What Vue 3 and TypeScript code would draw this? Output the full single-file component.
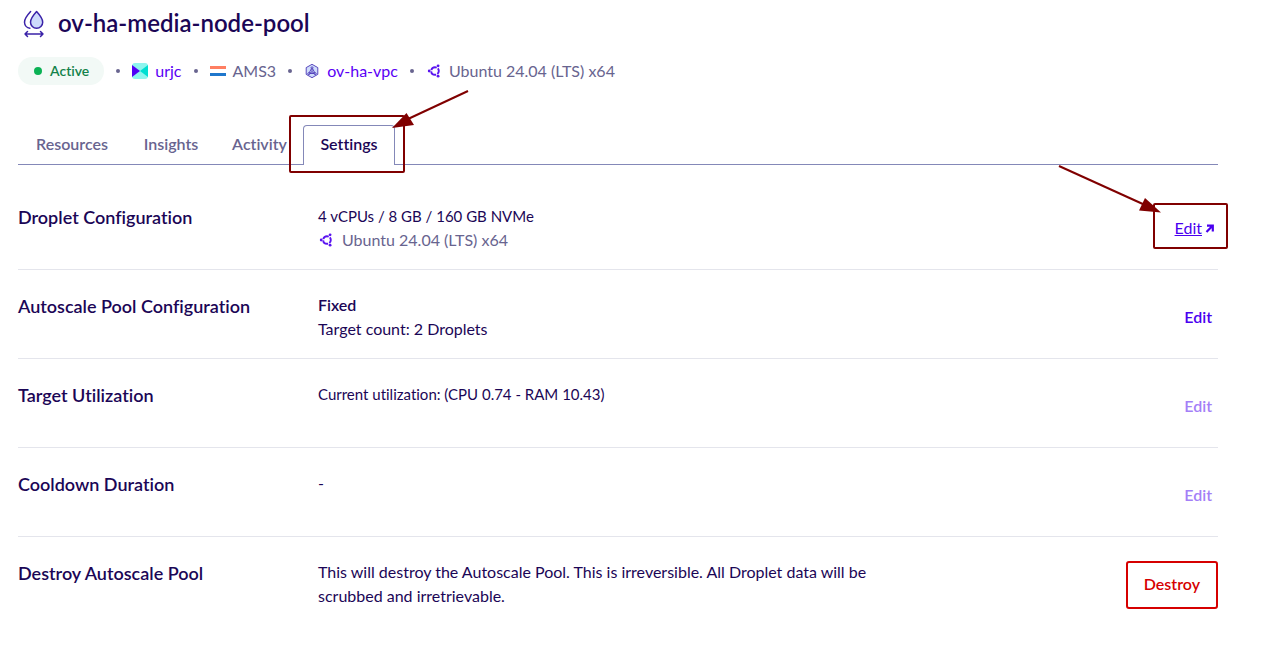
<script setup lang="ts">
interface Tab {
  label: string
  size: string
  active?: boolean
}

interface Setting {
  title: string
  strong?: string
  text: string
  figures?: boolean
  image?: string
  action: 'link' | 'edit' | 'disabled' | 'destroy'
}

const tabs: Tab[] = [
  { label: 'Resources', size: 'tab-xl' },
  { label: 'Insights', size: 'tab-m' },
  { label: 'Activity', size: 'tab-s' },
  { label: 'Settings', size: 'tab-l', active: true },
]

const settings: Setting[] = [
  {
    title: 'Droplet Configuration',
    text: '4 vCPUs / 8 GB / 160 GB NVMe',
    figures: true,
    image: 'Ubuntu 24.04 (LTS) x64',
    action: 'link',
  },
  {
    title: 'Autoscale Pool Configuration',
    strong: 'Fixed',
    text: 'Target count: 2 Droplets',
    action: 'edit',
  },
  {
    title: 'Target Utilization',
    text: 'Current utilization: (CPU 0.74 - RAM 10.43)',
    figures: true,
    action: 'disabled',
  },
  { title: 'Cooldown Duration', text: '-', action: 'disabled' },
  {
    title: 'Destroy Autoscale Pool',
    text: 'This will destroy the Autoscale Pool. This is irreversible. All Droplet data will be scrubbed and irretrievable.',
    action: 'destroy',
  },
]
</script>

<template>
  <main class="page">
    <svg class="defs" width="0" height="0" aria-hidden="true">
      <symbol id="ubuntu" viewBox="0 0 16 16">
        <circle cx="9" cy="8" r="3.8" fill="none" stroke="currentColor" stroke-width="1.9" stroke-dasharray="6.7 1.26" stroke-dashoffset="3.35" />
        <circle cx="3.2" cy="8" r="1.4" fill="currentColor" />
        <circle cx="12.1" cy="2.8" r="1.4" fill="currentColor" />
        <circle cx="12.1" cy="13.2" r="1.4" fill="currentColor" />
      </symbol>
    </svg>

    <header class="head">
      <svg class="pool-icon" viewBox="0 0 32 32" width="32" height="32" aria-hidden="true">
        <g fill="none" stroke="#3a22a8" stroke-width="1.5" stroke-linecap="round" stroke-linejoin="round">
          <path d="M12.6 4.6C9.300 8.200 6.500 11.600 6.500 15.200a6.200 6.200 0 0 0 5.400 6" />
          <path d="M18.600 4.600C15.600 7.900 12.500 11.900 12.500 15.200a6.100 6.100 0 0 0 12.200 0C24.700 11.900 21.600 7.900 18.600 4.600z" fill="#cddafb" />
          <path d="M7 27H25M9.500 24.500L7 27l2.500 2.500M22.500 24.500L25 27l-2.500 2.500" />
        </g>
      </svg>
      <h1>ov-ha-media-node-pool</h1>
    </header>

    <div class="meta">
      <span class="status"><i class="status-dot"></i>Active</span>
      <i class="sep"></i>
      <a class="meta-item" href="#team">
        <svg viewBox="0 0 16 16" width="16" height="16" aria-hidden="true">
          <rect width="16" height="16" rx="3" fill="#8df5ee" />
          <path d="M0 2L8 8L0 14z" fill="#4f00f5" />
          <path d="M16 2L8 8L16 14z" fill="#00dfd2" />
        </svg>
        urjc
      </a>
      <i class="sep"></i>
      <span class="meta-item">
        <svg viewBox="0 0 16 16" width="16" height="16" aria-hidden="true">
          <rect y="3" width="16" height="3" fill="#ff7f62" />
          <rect y="10" width="16" height="3" fill="#1f77cc" />
        </svg>
        AMS3
      </span>
      <i class="sep"></i>
      <a class="meta-item" href="#vpc">
        <svg viewBox="0 0 16 16" width="16" height="16" aria-hidden="true">
          <g fill="none" stroke="#4a35b5" stroke-width="0.9" stroke-linejoin="round">
            <path d="M8 1.300L13.800 4.600V11.400L8 14.700L2.200 11.400V4.600z" fill="#cfdcfb" />
            <path d="M8 5.200V8.800M7.500 5.500L4.800 10.500H11.200L8.500 5.500M8 8.800L4.800 10.800M8 8.800L11.200 10.800" />
            <circle cx="8" cy="4.800" r="1" fill="#cfdcfb" />
            <circle cx="4.800" cy="10.700" r="1" fill="#cfdcfb" />
            <circle cx="11.200" cy="10.700" r="1" fill="#cfdcfb" />
          </g>
        </svg>
        ov-ha-vpc
      </a>
      <i class="sep"></i>
      <span class="meta-item">
        <svg class="ubuntu" width="16" height="16" aria-hidden="true"><use href="#ubuntu" /></svg>
        Ubuntu 24.04 (LTS) x64
      </span>
    </div>

    <nav class="tabs">
      <a
        v-for="tab in tabs"
        :key="tab.label"
        href="#"
        :class="['tab', tab.size, { active: tab.active }]"
        :aria-current="tab.active ? 'page' : undefined"
      >
        {{ tab.label }}
        <template v-if="tab.active">
          <span class="mark mark-tab"></span>
          <svg class="arrow arrow-tab" viewBox="0 0 80 42" width="80" height="42" aria-hidden="true">
            <path d="M78 3L18 31" />
            <path class="tip" d="M2 40L16.500 25L24 37z" />
          </svg>
        </template>
      </a>
    </nav>

    <section v-for="row in settings" :key="row.title" class="row">
      <h2>{{ row.title }}</h2>
      <div class="detail">
        <strong v-if="row.strong">{{ row.strong }}</strong>
        <p :class="{ figures: row.figures }">{{ row.text }}</p>
        <p v-if="row.image" class="image">
          <svg class="ubuntu" width="16" height="16" aria-hidden="true"><use href="#ubuntu" /></svg>
          {{ row.image }}
        </p>
      </div>
      <div v-if="row.action === 'link'" class="action">
        <a class="edit-link" href="#resize">
          <span>Edit</span>
          <svg viewBox="0 0 10 10" width="10" height="10" aria-hidden="true">
            <path d="M2 2.600H7.800V8.400M7.800 2.600L1.500 9" fill="none" stroke="currentColor" stroke-width="2.200" />
          </svg>
        </a>
        <span class="mark mark-edit"></span>
        <svg class="arrow arrow-edit" viewBox="0 0 106 52" width="106" height="52" aria-hidden="true">
          <path d="M2 3L88 42" />
          <path class="tip" d="M104 49.500L82 47.500L88 35z" />
        </svg>
      </div>
      <div v-else class="action">
        <button v-if="row.action === 'destroy'" type="button" class="destroy">Destroy</button>
        <button v-else type="button" class="edit" :disabled="row.action === 'disabled'">Edit</button>
      </div>
    </section>
  </main>
</template>

<style>
body {
  margin: 0;
  background: #fff;
}
</style>

<style scoped>
.page {
  box-sizing: border-box;
  padding: 7px 53px 8px 18px;
  overflow: hidden;
  font-family: Lato, "Open Sans", sans-serif;
  font-size: 16px;
  line-height: 24px;
  font-variant-ligatures: none;
  color: #1b0656;
}

.defs {
  display: block;
}

.head {
  display: flex;
  align-items: center;
  gap: 8px;
}

h1,
h2,
p {
  margin: 0;
}

h1 {
  font-size: 24px;
  line-height: 32px;
  font-weight: 600;
}

.meta {
  display: flex;
  align-items: center;
  gap: 12px;
  margin-top: 18px;
  color: #68648f;
}

.status {
  display: flex;
  align-items: center;
  gap: 8px;
  padding: 2px 15px 2px 16px;
  border-radius: 14px;
  background: #f2f9f6;
  color: #12824a;
  font-size: 14px;
  font-weight: 600;
}

.status-dot {
  width: 8px;
  height: 8px;
  border-radius: 50%;
  background: #0bb255;
}

.sep {
  width: 4px;
  height: 4px;
  border-radius: 50%;
  background: #68648f;
}

.meta-item {
  display: flex;
  align-items: center;
  gap: 7px;
}

a.meta-item {
  color: #5a00f5;
  text-decoration: none;
}

.ubuntu {
  color: #5a14f0;
}

.tabs {
  display: flex;
  margin-top: 40px;
  margin-bottom: 16px;
  border-bottom: 1px solid #8488b8;
}

.tab {
  position: relative;
  box-sizing: border-box;
  margin-bottom: -1px;
  padding: 6px 0 9px;
  border: 1px solid transparent;
  border-bottom: 0;
  border-radius: 4px 4px 0 0;
  color: #68648f;
  font-weight: 600;
  text-align: center;
  text-decoration: none;
}

.tab-xl {
  width: 108px;
}

.tab-l {
  width: 92px;
}

.tab-m {
  width: 90px;
}

.tab-s {
  width: 87px;
}

.tab.active {
  border-color: #8488b8;
  background: #fff;
  color: #1b0656;
}

.row {
  display: grid;
  grid-template-columns: 300px minmax(0, 560px) 1fr;
  padding: 23px 0 16px;
  border-bottom: 1px solid #e4e5ec;
}

.row:last-child {
  border-bottom: 0;
}

h2 {
  font-size: 18px;
  line-height: 26px;
  font-weight: 600;
}

.detail {
  min-height: 49px;
}

.figures {
  font-size: 15px;
}

strong {
  display: block;
  font-weight: 600;
}

.image {
  display: flex;
  align-items: center;
  gap: 8px;
  color: #68648f;
}

.action {
  position: relative;
  display: flex;
  align-items: center;
  justify-content: flex-end;
  padding-top: 1px;
}

.edit-link {
  display: flex;
  align-items: center;
  gap: 3px;
  padding-bottom: 2px;
  margin-right: 3px;
  color: #4a00f0;
  text-decoration: none;
}

.edit-link span {
  text-decoration: underline;
}

button {
  font: inherit;
  font-weight: 600;
  background: #fff;
  cursor: pointer;
}

.edit {
  padding: 3px 6px 5px;
  border: 0;
  color: #4a00f0;
}

.edit:disabled {
  color: #a47ff7;
  cursor: default;
}

.destroy {
  padding: 9px 16px 11px;
  border: 2px solid #d60000;
  border-radius: 3px;
  color: #d60000;
}

.mark {
  position: absolute;
  border: 2px solid #800000;
  border-radius: 2px;
  pointer-events: none;
}

.mark-tab {
  inset: -11px -11px -8px -15px;
}

.mark-edit {
  inset: -1px -10px 4px auto;
  width: 71px;
}

.arrow {
  position: absolute;
  pointer-events: none;
}

.arrow path {
  fill: none;
  stroke: #800000;
  stroke-width: 2;
}

.arrow .tip {
  fill: #800000;
  stroke: none;
}

.arrow-tab {
  top: -38px;
  left: 86px;
}

.arrow-edit {
  top: -41px;
  right: 55px;
}
</style>
